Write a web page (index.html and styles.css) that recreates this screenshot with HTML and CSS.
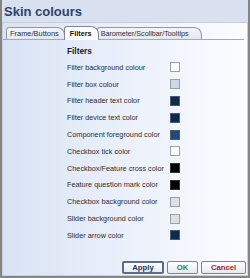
FILE: index.html
```html
<!DOCTYPE html>
<html>
<head>
<meta charset="utf-8">
<link rel="stylesheet" href="styles.css">
</head>
<body>
<div class="window">
  <div class="title">Skin colours</div>
  <div class="panel">
    <div class="tabs">
      <div class="tab">Frame/Buttons</div>
      <div class="tab active">Filters</div>
      <div class="tab last">Barometer/Scollbar/Tooltips</div>
    </div>
    <div class="content">
      <div class="heading">Filters</div>
      <div class="rows">
        <div class="label">Filter background colour</div><div class="sw c-white"></div>
        <div class="label">Filter box colour</div><div class="sw c-box"></div>
        <div class="label">Filter header text color</div><div class="sw c-navy"></div>
        <div class="label">Filter device text color</div><div class="sw c-navy"></div>
        <div class="label">Component foreground color</div><div class="sw c-comp"></div>
        <div class="label">Checkbox tick color</div><div class="sw c-white"></div>
        <div class="label">Checkbox/Feature cross color</div><div class="sw c-black"></div>
        <div class="label">Feature question mark color</div><div class="sw c-black"></div>
        <div class="label">Checkbox background color</div><div class="sw c-grey"></div>
        <div class="label">Slider background color</div><div class="sw c-grey"></div>
        <div class="label">Slider arrow color</div><div class="sw c-navy"></div>
      </div>
    </div>
    <div class="footer">
      <button class="btn default">Apply</button>
      <button class="btn ok">OK</button>
      <button class="btn cancel">Cancel</button>
    </div>
  </div>
</div>
</body>
</html>
```

FILE: styles.css
```css
html, body {
  margin: 0;
  padding: 0;
}
body {
  width: 250px;
  height: 278px;
  overflow: hidden;
  font-family: "Liberation Sans", Arial, sans-serif;
  background: #dae1ef;
}
.window {
  box-sizing: border-box;
  width: 250px;
  height: 278px;
  border-left: 2px solid #858585;
  border-right: 2px solid #858585;
  border-bottom: 2px solid #858585;
  display: flex;
  flex-direction: column;
  background: #d9e0ef;
}
.title {
  height: 22px;
  line-height: 23px;
  padding-left: 2px;
  font-size: 13px;
  font-weight: bold;
  color: #2c4469;
}
.panel {
  flex: 1;
  display: flex;
  flex-direction: column;
  border: 1px solid #c9d0dc;
  background: linear-gradient(to right, #d9e3f4 0%, #e9effa 45%, #fbfcff 100%);
}
.tabs {
  display: flex;
  align-items: flex-end;
  margin: 3px 3px 0 0;
  padding-left: 3px;
  height: 13px;
  border-bottom: 1px solid #a3aab6;
}
.tab {
  box-sizing: border-box;
  height: 12px;
  line-height: 11px;
  padding: 0 5px 0 3px;
  font-size: 7.45px;
  color: #2a2e36;
  background: linear-gradient(#f3f5f9, #e3e7ef);
  border: 1px solid #8f98a8;
  border-bottom: 0;
  border-radius: 3px 8px 0 0;
  white-space: nowrap;
  z-index: 1;
}
.tab.active {
  height: 14px;
  margin-bottom: -1px;
  margin-left: -1px;
  padding: 0 6px 0 5px;
  line-height: 13px;
  font-weight: bold;
  font-size: 7.3px;
  color: #111;
  background: #ffffff;
  border-color: #7d8797;
  z-index: 3;
}
.tab.last {
  margin-left: -2px;
  padding-right: 12px;
  font-size: 7.2px;
}
.content {
  flex: 1;
  padding: 3px 0 0 64px;
}
.heading {
  height: 16px;
  line-height: 16px;
  font-size: 8.3px;
  font-weight: bold;
  color: #1e1f24;
}
.rows {
  display: grid;
  grid-template-columns: 103px 10px;
  grid-auto-rows: 16.8px;
  align-items: center;
}
.label {
  font-size: 7.3px;
  color: #2b2d31;
  white-space: nowrap;
}
.sw {
  box-sizing: border-box;
  width: 10px;
  height: 10px;
  border: 1px solid #9aa0a8;
}
.c-white { background: #ffffff; }
.c-box { background: #c9d9ec; }
.c-navy { background: #0e2a4e; border-color: #4b5a70; }
.c-comp { background: #1f4a7e; border-color: #4b5a70; }
.c-black { background: #000000; border-color: #333; }
.c-grey { background: #e0e0e0; }
.footer {
  display: flex;
  justify-content: flex-end;
  gap: 3px;
  padding: 0 1px 1px 0;
}
.btn {
  box-sizing: border-box;
  height: 13px;
  padding: 0;
  margin: 0;
  font-family: "Liberation Sans", Arial, sans-serif;
  font-size: 7.7px;
  font-weight: bold;
  line-height: 11px;
  border: 1px solid #6f84a8;
  border-radius: 2px;
  background: linear-gradient(#ffffff, #e6eaf2);
}
.btn.default {
  width: 42px;
  border: 2px solid #5a6d8e;
  line-height: 9px;
  color: #1c365c;
}
.btn.ok {
  width: 31px;
  color: #2f8a22;
}
.btn.cancel {
  width: 45px;
  color: #b01a1a;
}
```
